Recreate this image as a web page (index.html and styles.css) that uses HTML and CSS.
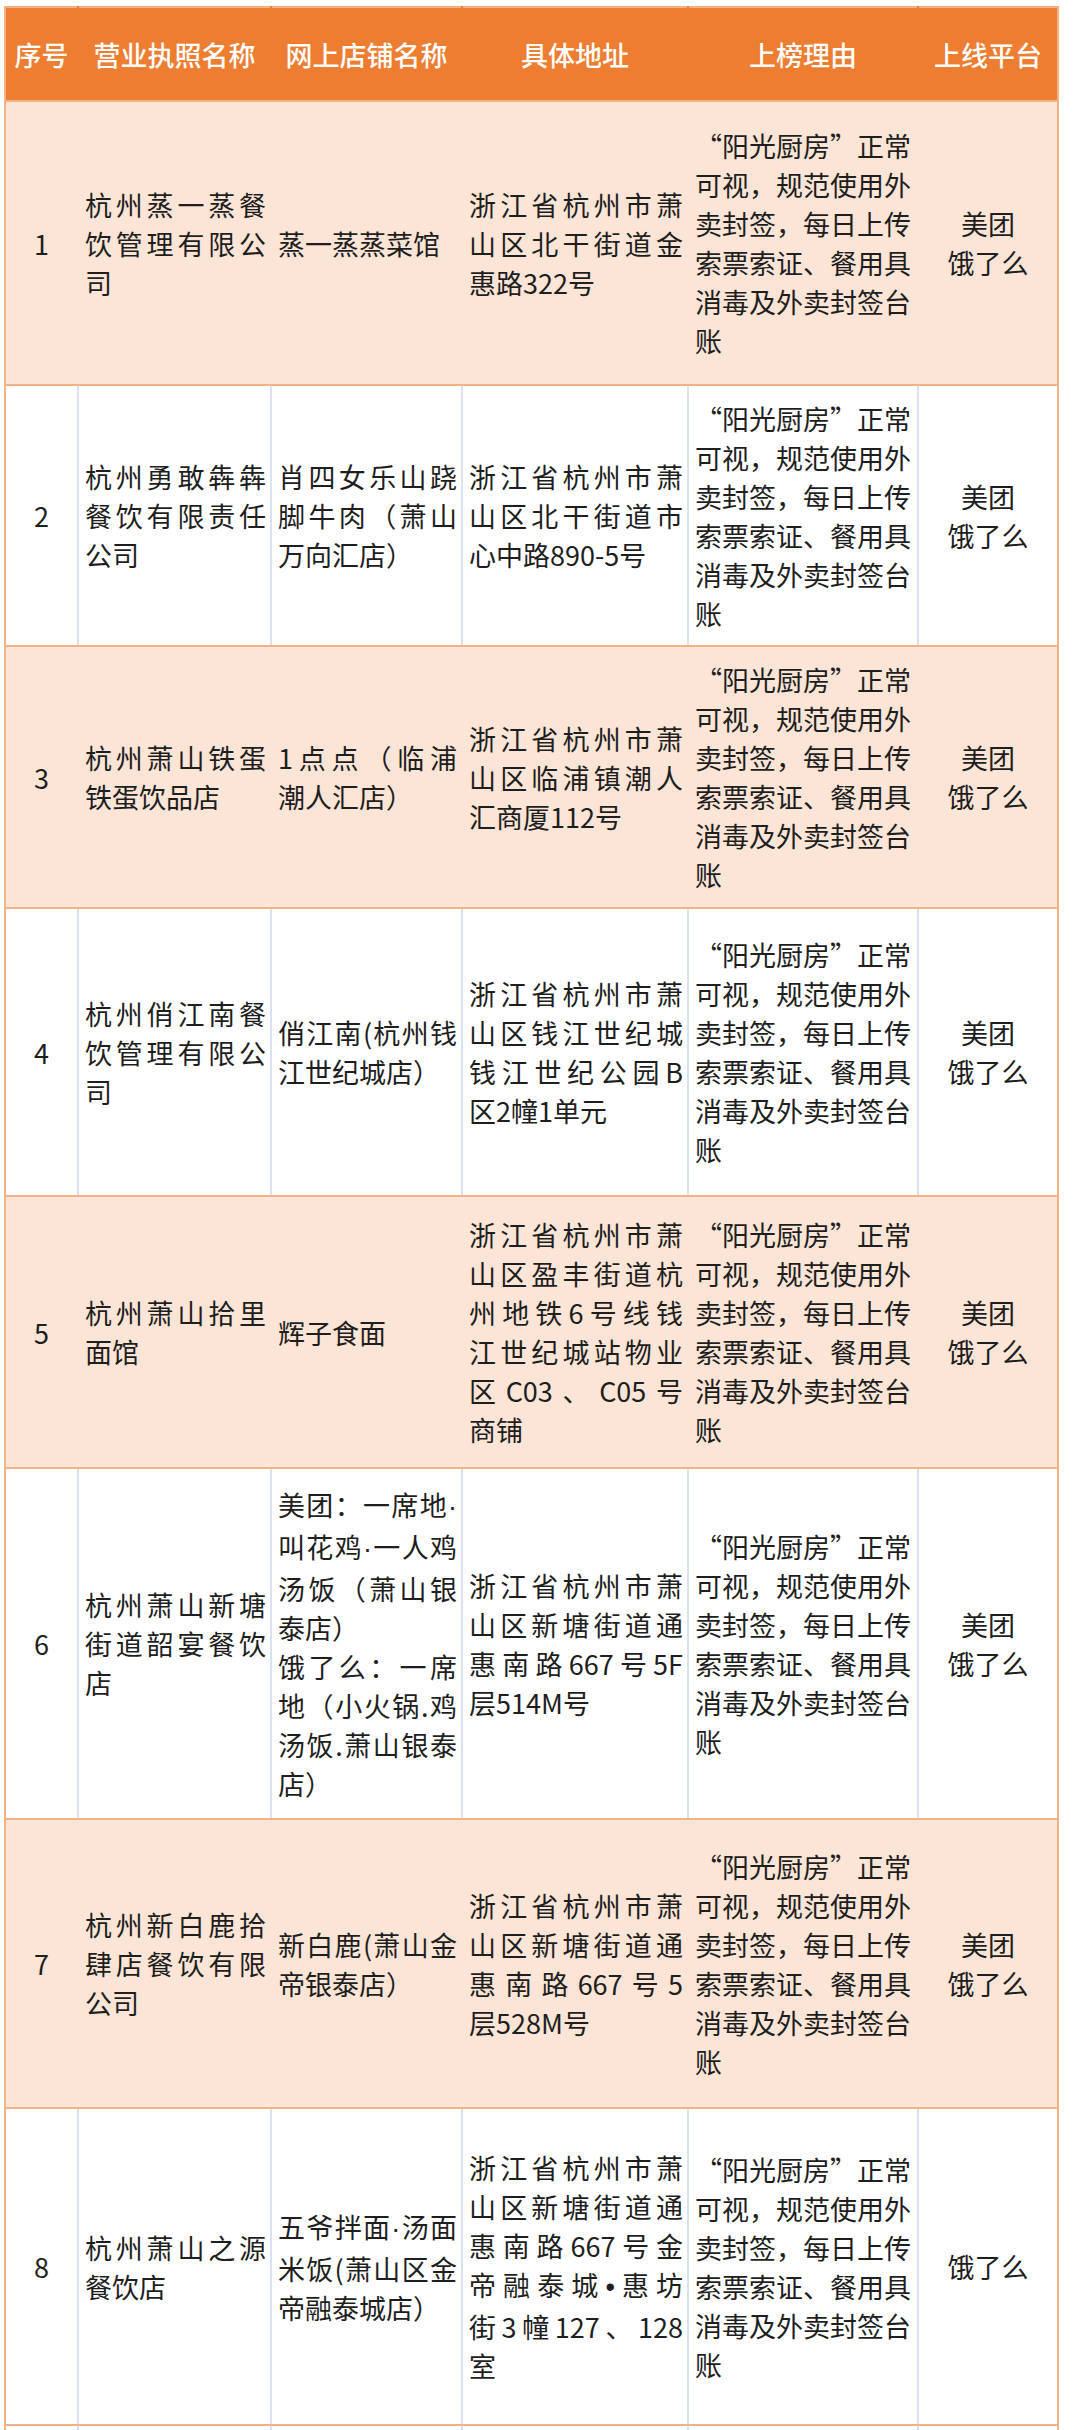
FILE: index.html
```html
<!DOCTYPE html>
<html lang="zh-CN">
<head>
<meta charset="utf-8">
<title>上榜名单</title>
<link rel="stylesheet" href="styles.css">
</head>
<body>
<div class="wrap">
<table class="list">
  <colgroup>
    <col class="c-no"><col class="c-lic"><col class="c-shop"><col class="c-addr"><col class="c-why"><col class="c-plat">
  </colgroup>
  <thead>
    <tr>
      <th>序号</th><th>营业执照名称</th><th>网上店铺名称</th><th>具体地址</th><th>上榜理由</th><th>上线平台</th>
    </tr>
  </thead>
  <tbody>
    <tr class="odd h1">
      <td class="no">1</td>
      <td><span class="ln">杭州蒸一蒸餐</span><span class="ln">饮管理有限公</span><span class="ln end">司</span></td>
      <td>蒸一蒸蒸菜馆</td>
      <td><span class="ln">浙江省杭州市萧</span><span class="ln">山区北干街道金</span><span class="ln end">惠路322号</span></td>
      <td class="why"><span class="ln end">“阳光厨房”正常</span><span class="ln end">可视，规范使用外</span><span class="ln end">卖封签，每日上传</span><span class="ln end">索票索证、餐用具</span><span class="ln end">消毒及外卖封签台</span><span class="ln end">账</span></td>
      <td class="plat">美团<br>饿了么</td>
    </tr>
    <tr class="even h2">
      <td class="no">2</td>
      <td><span class="ln">杭州勇敢犇犇</span><span class="ln">餐饮有限责任</span><span class="ln end">公司</span></td>
      <td><span class="ln">肖四女乐山跷</span><span class="ln">脚牛肉（萧山</span><span class="ln end">万向汇店）</span></td>
      <td><span class="ln">浙江省杭州市萧</span><span class="ln">山区北干街道市</span><span class="ln end">心中路890-5号</span></td>
      <td class="why"><span class="ln end">“阳光厨房”正常</span><span class="ln end">可视，规范使用外</span><span class="ln end">卖封签，每日上传</span><span class="ln end">索票索证、餐用具</span><span class="ln end">消毒及外卖封签台</span><span class="ln end">账</span></td>
      <td class="plat">美团<br>饿了么</td>
    </tr>
    <tr class="odd h3">
      <td class="no">3</td>
      <td><span class="ln">杭州萧山铁蛋</span><span class="ln end">铁蛋饮品店</span></td>
      <td><span class="ln">1点点（临浦</span><span class="ln end">潮人汇店）</span></td>
      <td><span class="ln">浙江省杭州市萧</span><span class="ln">山区临浦镇潮人</span><span class="ln end">汇商厦112号</span></td>
      <td class="why"><span class="ln end">“阳光厨房”正常</span><span class="ln end">可视，规范使用外</span><span class="ln end">卖封签，每日上传</span><span class="ln end">索票索证、餐用具</span><span class="ln end">消毒及外卖封签台</span><span class="ln end">账</span></td>
      <td class="plat">美团<br>饿了么</td>
    </tr>
    <tr class="even h4">
      <td class="no">4</td>
      <td><span class="ln">杭州俏江南餐</span><span class="ln">饮管理有限公</span><span class="ln end">司</span></td>
      <td><span class="ln">俏江南(杭州钱</span><span class="ln end">江世纪城店）</span></td>
      <td><span class="ln">浙江省杭州市萧</span><span class="ln">山区钱江世纪城</span><span class="ln">钱江世纪公园B</span><span class="ln end">区2幢1单元</span></td>
      <td class="why"><span class="ln end">“阳光厨房”正常</span><span class="ln end">可视，规范使用外</span><span class="ln end">卖封签，每日上传</span><span class="ln end">索票索证、餐用具</span><span class="ln end">消毒及外卖封签台</span><span class="ln end">账</span></td>
      <td class="plat">美团<br>饿了么</td>
    </tr>
    <tr class="odd h5">
      <td class="no">5</td>
      <td><span class="ln">杭州萧山拾里</span><span class="ln end">面馆</span></td>
      <td>辉子食面</td>
      <td><span class="ln">浙江省杭州市萧</span><span class="ln">山区盈丰街道杭</span><span class="ln">州地铁6号线钱</span><span class="ln">江世纪城站物业</span><span class="ln">区C03、C05号</span><span class="ln end">商铺</span></td>
      <td class="why"><span class="ln end">“阳光厨房”正常</span><span class="ln end">可视，规范使用外</span><span class="ln end">卖封签，每日上传</span><span class="ln end">索票索证、餐用具</span><span class="ln end">消毒及外卖封签台</span><span class="ln end">账</span></td>
      <td class="plat">美团<br>饿了么</td>
    </tr>
    <tr class="even h6">
      <td class="no">6</td>
      <td><span class="ln">杭州萧山新塘</span><span class="ln">街道韶宴餐饮</span><span class="ln end">店</span></td>
      <td><span class="ln">美团：一席地<span class="dot">·</span></span><span class="ln">叫花鸡<span class="dot">·</span>一人鸡</span><span class="ln">汤饭（萧山银</span><span class="ln end">泰店）</span><span class="ln">饿了么：一席</span><span class="ln">地（小火锅.鸡</span><span class="ln">汤饭.萧山银泰</span><span class="ln end">店）</span></td>
      <td><span class="ln">浙江省杭州市萧</span><span class="ln">山区新塘街道通</span><span class="ln">惠南路667号5F</span><span class="ln end">层514M号</span></td>
      <td class="why"><span class="ln end">“阳光厨房”正常</span><span class="ln end">可视，规范使用外</span><span class="ln end">卖封签，每日上传</span><span class="ln end">索票索证、餐用具</span><span class="ln end">消毒及外卖封签台</span><span class="ln end">账</span></td>
      <td class="plat">美团<br>饿了么</td>
    </tr>
    <tr class="odd h7">
      <td class="no">7</td>
      <td><span class="ln">杭州新白鹿拾</span><span class="ln">肆店餐饮有限</span><span class="ln end">公司</span></td>
      <td><span class="ln">新白鹿(萧山金</span><span class="ln end">帝银泰店）</span></td>
      <td><span class="ln">浙江省杭州市萧</span><span class="ln">山区新塘街道通</span><span class="ln">惠南路667号5</span><span class="ln end">层528M号</span></td>
      <td class="why"><span class="ln end">“阳光厨房”正常</span><span class="ln end">可视，规范使用外</span><span class="ln end">卖封签，每日上传</span><span class="ln end">索票索证、餐用具</span><span class="ln end">消毒及外卖封签台</span><span class="ln end">账</span></td>
      <td class="plat">美团<br>饿了么</td>
    </tr>
    <tr class="even h8">
      <td class="no">8</td>
      <td><span class="ln">杭州萧山之源</span><span class="ln end">餐饮店</span></td>
      <td><span class="ln">五爷拌面<span class="dot">·</span>汤面</span><span class="ln">米饭(萧山区金</span><span class="ln end">帝融泰城店）</span></td>
      <td><span class="ln">浙江省杭州市萧</span><span class="ln">山区新塘街道通</span><span class="ln">惠南路667号金</span><span class="ln">帝融泰城<span class="dot">•</span>惠坊</span><span class="ln">街3幢127、128</span><span class="ln end">室</span></td>
      <td class="why"><span class="ln end">“阳光厨房”正常</span><span class="ln end">可视，规范使用外</span><span class="ln end">卖封签，每日上传</span><span class="ln end">索票索证、餐用具</span><span class="ln end">消毒及外卖封签台</span><span class="ln end">账</span></td>
      <td class="plat">饿了么</td>
    </tr>
    <tr class="even h9">
      <td></td><td></td><td></td><td></td><td></td><td></td>
    </tr>
  </tbody>
</table>
</div>
</body>
</html>
```

FILE: styles.css
```css
html, body {
  margin: 0;
  padding: 0;
  background: #ffffff;
}

body {
  font-family: "Noto Sans CJK SC", "Noto Sans", sans-serif;
  color: #1e1e1e;
}

.wrap {
  padding: 6px 0 0 4px;
}

.list {
  border-collapse: collapse;
  table-layout: fixed;
  width: 1053px;
  font-size: 27px;
  line-height: 39px;
}

.c-no { width: 73px; }
.c-lic { width: 193px; }
.c-shop { width: 191px; }
.c-addr { width: 226px; }
.c-why { width: 230px; }
.c-plat { width: 140px; }

.list th {
  background: #ED7D31;
  color: #ffffff;
  font-weight: 500;
  height: 92px;
  padding: 0;
  text-align: center;
  vertical-align: middle;
  white-space: nowrap;
  border-top: 2px solid #F4B183;
  border-bottom: 2px solid #F4B183;
  border-left: 2px solid #ED7D31;
  border-right: 2px solid #ED7D31;
}

.list th:first-child { border-left-color: #F4B183; }
.list th:last-child { border-right-color: #F4B183; }

.list td {
  padding: 0 4px 0 6px;
  vertical-align: middle;
  text-align: left;
  border-top: 2px solid #F4B183;
  border-bottom: 2px solid #F4B183;
  border-left: 2px solid #D9E2F3;
  border-right: 2px solid #D9E2F3;
}

.list tr.odd td {
  background: #FCE4D6;
  border-left-color: #FCE4D6;
  border-right-color: #FCE4D6;
}

.list td:first-child { border-left-color: #F4B183; }
.list td:last-child { border-right-color: #F4B183; }
.list tr.odd td:first-child { border-left-color: #F4B183; }
.list tr.odd td:last-child { border-right-color: #F4B183; }

.list td.no,
.list td.plat {
  text-align: center;
  padding: 0;
}

.list td.why {
  padding: 0 4px 0 6px;
}

.ln {
  display: block;
  white-space: nowrap;
  text-align: justify;
  text-align-last: justify;
}

.ln.end {
  text-align-last: left;
}

.dot {
  font-family: "Liberation Sans", "DejaVu Sans", sans-serif;
}

.h1 { height: 284px; }
.h2 { height: 261px; }
.h3 { height: 262px; }
.h4 { height: 288px; }
.h5 { height: 272px; }
.h6 { height: 351px; }
.h7 { height: 289px; }
.h8 { height: 317px; }
.h9 { height: 40px; }
```
